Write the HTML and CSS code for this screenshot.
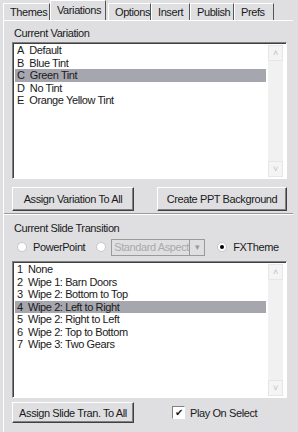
FILE: index.html
```html
<!DOCTYPE html>
<html lang="en">
<head>
  <meta charset="UTF-8" />
  <title>Variations</title>
  <link rel="stylesheet" href="styles.css">
</head>
<body>

  <div class="tabs">
    <div class="tab t-themes">Themes</div>
    <div class="tab active t-var">Variations</div>
    <div class="tab t-opt">Options</div>
    <div class="tab t-ins">Insert</div>
    <div class="tab t-pub">Publish</div>
    <div class="tab t-prefs">Prefs</div>
  </div>

  <div class="panel">
    <div class="label">Current Variation</div>
    <div class="listbox list-var">
      <ul class="items">
        <li>A&nbsp; Default</li>
        <li>B&nbsp; Blue Tint</li>
        <li class="sel">C&nbsp; Green Tint</li>
        <li>D&nbsp; No Tint</li>
        <li>E&nbsp; Orange Yellow Tint</li>
      </ul>
      <div class="scrollbar">
        <div class="sb-btn">&#708;</div>
        <div class="sb-track"></div>
        <div class="sb-btn">&#709;</div>
      </div>
    </div>

    <div class="btn-row">
      <button class="btn btn-left">Assign Variation To All</button>
      <button class="btn btn-right">Create PPT Background</button>
    </div>

    <div class="separator"></div>

    <div class="label">Current Slide Transition</div>
    <div class="radio-row">
      <label class="radio"><span class="dot"></span>PowerPoint</label>
      <label class="radio"><span class="dot"></span></label>
      <div class="combo">
        <span class="combo-text">Standard Aspect</span>
        <span class="combo-arrow">&#9662;</span>
      </div>
      <label class="radio fx"><span class="dot on"></span>FXTheme</label>
    </div>

    <div class="listbox list-tran">
      <ul class="items">
        <li>1&nbsp; None</li>
        <li>2&nbsp; Wipe 1: Barn Doors</li>
        <li>3&nbsp; Wipe 2: Bottom to Top</li>
        <li class="sel">4&nbsp; Wipe 2: Left to Right</li>
        <li>5&nbsp; Wipe 2: Right to Left</li>
        <li>6&nbsp; Wipe 2: Top to Bottom</li>
        <li>7&nbsp; Wipe 3: Two Gears</li>
      </ul>
      <div class="scrollbar">
        <div class="sb-btn">&#708;</div>
        <div class="sb-track"></div>
        <div class="sb-btn">&#709;</div>
      </div>
    </div>

    <div class="bottom-row">
      <button class="btn btn-left">Assign Slide Tran. To All</button>
      <label class="check"><span class="box">&#10004;</span>Play On Select</label>
    </div>
  </div>

</body>
</html>
```

FILE: styles.css
```css
body {
  margin: 0;
  background: #dfdfe2;
  font-family: "Liberation Sans", Arial, sans-serif;
  font-size: 11px;
  letter-spacing: -0.4px;
  color: #1a1a1a;
  width: 298px;
  height: 432px;
  overflow: hidden;
}
.tabs {
  display: flex;
  align-items: flex-end;
  height: 20px;
  padding-left: 3px;
}
.tab {
  height: 17px;
  line-height: 17px;
  padding-left: 6px;
  border-top: 1px solid #fff;
  border-left: 1px solid #fff;
  border-right: 1px solid #555;
  box-sizing: border-box;
  white-space: nowrap;
}
.tab.active {
  height: 20px;
  line-height: 18px;
  margin-right: 2px;
}
.t-themes { width: 47px; }
.t-var { width: 56px; }
.t-opt { width: 43px; }
.t-ins { width: 39px; }
.t-pub { width: 44px; }
.t-prefs { width: 40px; }
.panel {
  height: 412px;
  box-sizing: border-box;
  border-top: 1px solid #fff;
  border-left: 1px solid #fff;
  margin-left: 3px;
  margin-right: 5px;
  padding: 5px 6px 0 8px;
}
.label {
  height: 15px;
  line-height: 15px;
  padding-left: 2px;
}
.listbox {
  display: flex;
  background: #fff;
  border-top: 1px solid #808080;
  border-left: 1px solid #808080;
  border-right: 1px solid #fff;
  border-bottom: 1px solid #fff;
  box-shadow: inset 1px 1px 0 #404040;
  box-sizing: border-box;
  margin-top: 1px;
}
.list-var { height: 137px; }
.list-tran { height: 137px; margin-top: 5px; }
.items {
  flex: 1;
  list-style: none;
  margin: 0;
  padding: 1px 0 0 2px;
}
.items li {
  height: 12.5px;
  line-height: 12px;
  padding-left: 2px;
  white-space: nowrap;
}
.items li.sel {
  background: #a6a6ae;
}
.scrollbar {
  width: 15px;
  margin: 2px 3px 1px 2px;
  display: flex;
  flex-direction: column;
  background: #f1f1f1;
}
.sb-btn {
  height: 14px;
  font-size: 9px;
  line-height: 14px;
  text-align: center;
  color: #bfbfbf;
  border: 1px solid #e6e6e6;
  background: #f4f4f4;
}
.sb-track {
  flex: 1;
}
.btn-row {
  display: flex;
  justify-content: space-between;
  margin-top: 8px;
}
.btn {
  font-family: inherit;
  font-size: 11px;
  letter-spacing: -0.4px;
  color: #1a1a1a;
  height: 24px;
  background: #dfdfe2;
  border-top: 1px solid #fff;
  border-left: 1px solid #fff;
  border-right: 1px solid #404040;
  border-bottom: 1px solid #404040;
  box-shadow: inset -1px -1px 0 #808080;
  padding: 0;
}
.btn-left { width: 122px; }
.btn-right { width: 130px; }
.separator {
  height: 0;
  border-top: 1px solid #9a9a9a;
  border-bottom: 1px solid #fff;
  margin: 2px -6px 6px -8px;
}
.radio-row {
  display: flex;
  align-items: center;
  height: 18px;
  margin-top: 2px;
}
.radio {
  display: flex;
  align-items: center;
}
.dot {
  width: 10px;
  height: 10px;
  border-radius: 50%;
  background: #fff;
  border: 1px solid #c8c8c8;
  box-sizing: border-box;
  margin: 0 6px 0 5px;
  position: relative;
}
.dot.on::after {
  content: "";
  position: absolute;
  left: 2px;
  top: 2px;
  width: 4px;
  height: 4px;
  border-radius: 50%;
  background: #000;
}
.radio:nth-child(2) .dot { margin-left: 11px; margin-right: 5px; }
.combo {
  display: flex;
  width: 94px;
  height: 17px;
  background: #dfdfe2;
  border: 1px solid #9a9a9a;
  box-sizing: border-box;
  color: #a9a9a9;
}
.combo-text {
  flex: 1;
  line-height: 15px;
  padding-left: 2px;
  white-space: nowrap;
  overflow: hidden;
}
.combo-arrow {
  width: 14px;
  line-height: 15px;
  text-align: center;
  font-size: 9px;
  border-left: 1px solid #9a9a9a;
  color: #999;
}
.fx .dot { margin-left: 12px; }
.bottom-row {
  display: flex;
  align-items: center;
  margin-top: 4px;
}
.bottom-row .btn { height: 21px; }
.check {
  display: flex;
  align-items: center;
  margin-left: 38px;
}
.box {
  width: 13px;
  height: 13px;
  background: #fff;
  border-top: 1px solid #808080;
  border-left: 1px solid #808080;
  border-right: 1px solid #fff;
  border-bottom: 1px solid #fff;
  box-sizing: border-box;
  font-size: 10px;
  letter-spacing: 0;
  line-height: 11px;
  text-align: center;
  margin-right: 5px;
}
```
